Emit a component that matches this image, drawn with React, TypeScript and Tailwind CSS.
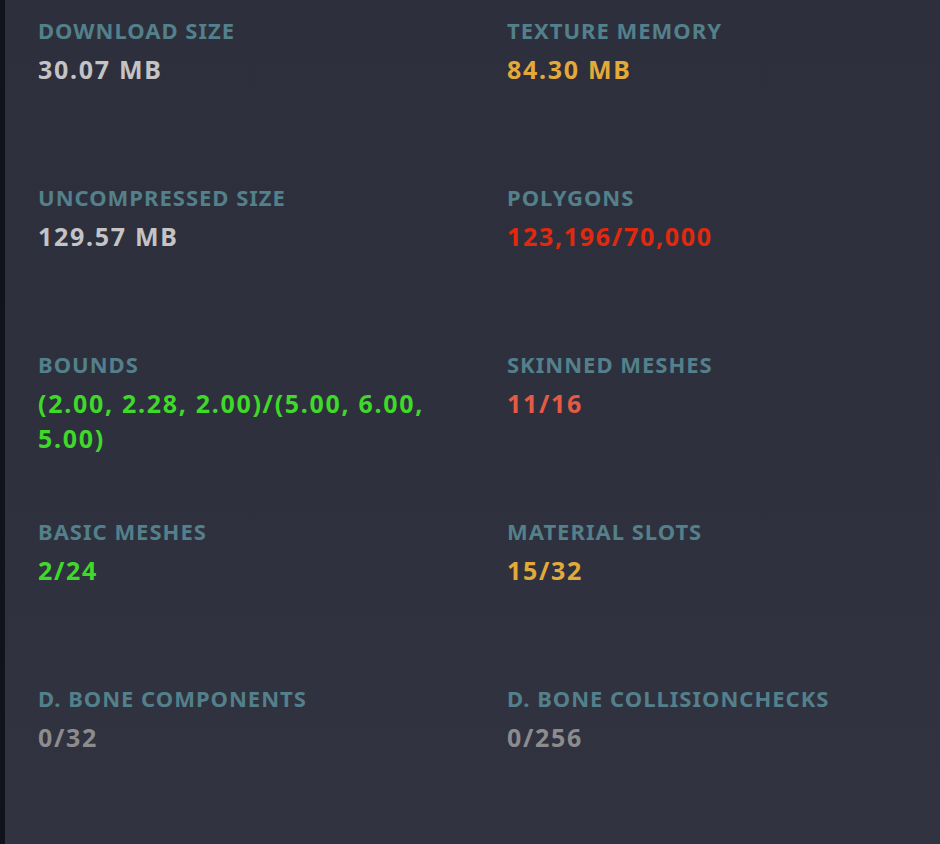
import React from "react";

type Item = { label: string; value: string; color: string };

const items: Item[] = [
  { label: "Download Size", value: "30.07 MB", color: "text-[#c4c4c6]" },
  { label: "Texture Memory", value: "84.30 MB", color: "text-[#e3aa3a]" },
  { label: "Uncompressed Size", value: "129.57 MB", color: "text-[#c4c4c6]" },
  { label: "Polygons", value: "123,196/70,000", color: "text-[#e0290e]" },
  { label: "Bounds", value: "(2.00, 2.28, 2.00)/(5.00, 6.00, 5.00)", color: "text-[#3fd92a]" },
  { label: "Skinned Meshes", value: "11/16", color: "text-[#e65a45]" },
  { label: "Basic Meshes", value: "2/24", color: "text-[#3fd92a]" },
  { label: "Material Slots", value: "15/32", color: "text-[#e3aa3a]" },
  { label: "D. Bone Components", value: "0/32", color: "text-[#8c8c8e]" },
  { label: "D. Bone Collisionchecks", value: "0/256", color: "text-[#8c8c8e]" },
];

export default function App() {
  return (
    <div
      className="flex h-[844px] w-[940px] overflow-hidden bg-gradient-to-b from-[#2d303c] via-[#2e313d] to-[#313340]"
      style={{ fontFamily: '"Noto Sans", "DejaVu Sans", sans-serif' }}
    >
      <div className="w-[5px] shrink-0 bg-[#10131a]" />
      <div className="grid flex-1 grid-cols-[469px_1fr] content-start">
        {items.map((it) => (
          <div key={it.label} className="h-[167px] pl-[33px] pr-[20px] pt-[15px]">
            <div className="text-[22px] font-bold uppercase leading-[30px] tracking-[1px] text-[#53808b]">
              {it.label}
            </div>
            <div className={`mt-[7px] text-[25px] font-bold leading-[35px] tracking-[1.7px] ${it.color}`}>
              {it.value}
            </div>
          </div>
        ))}
      </div>
    </div>
  );
}
